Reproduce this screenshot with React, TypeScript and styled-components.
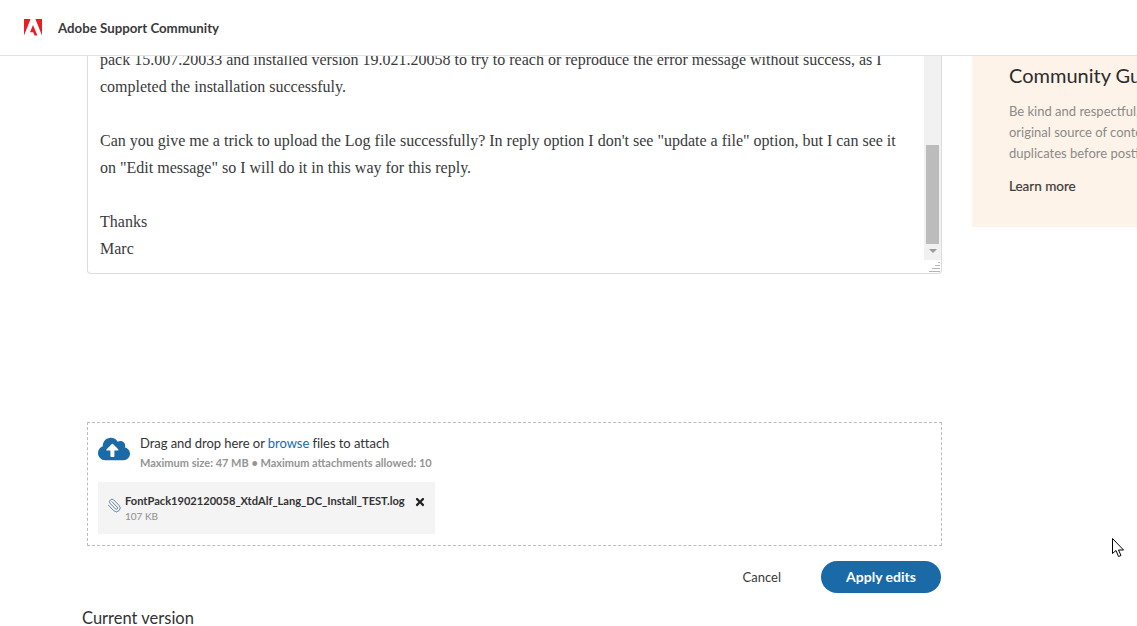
import React from 'react';
import styled, { createGlobalStyle } from 'styled-components';
import { FaCloudUploadAlt, FaTimes } from 'react-icons/fa';
import { Paperclip } from 'lucide-react';

const UI_FONT = `Lato, "Open Sans", sans-serif`;

const GlobalStyle = createGlobalStyle`
  html, body {
    margin: 0;
    padding: 0;
    height: 100%;
    overflow: hidden;
    background: #fff;
  }
  #root {
    height: 100%;
  }
`;

const Page = styled.div`
  position: relative;
  width: 1137px;
  height: 626px;
  overflow: hidden;
  font-family: ${UI_FONT};
  color: #2c2c2c;
`;

const Header = styled.header`
  display: flex;
  align-items: center;
  gap: 16px;
  height: 55px;
  padding-left: 24px;
  border-bottom: 1px solid #e4e4e4;
  box-sizing: content-box;
`;

const BrandName = styled.span`
  font-size: 13.25px;
  font-weight: 700;
  color: #3a3a3a;
`;

const Body = styled.div`
  display: flex;
  align-items: flex-start;
  padding-left: 87px;
  gap: 30px;
`;

const Main = styled.main`
  flex: 0 0 855px;
  width: 855px;
`;

const Editor = styled.div`
  display: flex;
  height: 218px;
  border: 1px solid #dcdcdc;
  border-top: 0;
  border-radius: 0 0 4px 4px;
  box-sizing: border-box;
  overflow: hidden;
`;

const EditorText = styled.div`
  flex: 1;
  padding: 0 12px;
  overflow: hidden;
  font-family: "Liberation Serif", serif;
  font-size: 16px;
  line-height: 27px;
  color: #3a3a3a;
`;

const TextLine = styled.div<{ $lead?: boolean }>`
  white-space: nowrap;
  margin-top: ${(p) => (p.$lead ? '-10px' : '0')};
  min-height: 27px;
`;

const ScrollColumn = styled.div`
  display: flex;
  flex-direction: column;
  width: 17px;
`;

const ScrollTrack = styled.div`
  display: flex;
  flex-direction: column;
  flex: 1;
  background: #f1f1f1;
  padding: 89px 2px 0;
`;

const ScrollThumb = styled.div`
  height: 99px;
  background: #bcbcbc;
`;

const ScrollArrow = styled.div`
  align-self: center;
  width: 0;
  height: 0;
  margin-top: 5px;
  border-left: 4px solid transparent;
  border-right: 4px solid transparent;
  border-top: 4px solid #9a9a9a;
`;

const ResizeCorner = styled.div`
  display: flex;
  justify-content: flex-end;
  height: 13px;
`;

const DropZone = styled.section`
  margin-top: 148px;
  height: 124px;
  box-sizing: border-box;
  border: 1px dashed #bcbcbc;
  padding: 10px 10px;
`;

const DropRow = styled.div`
  display: flex;
  gap: 10px;
`;

const CloudIcon = styled(FaCloudUploadAlt)`
  width: 32px;
  height: 32px;
  color: #1a6aa8;
`;

const DropCopy = styled.div`
  display: flex;
  flex-direction: column;
`;

const DropTitle = styled.div`
  font-size: 13px;
  letter-spacing: -0.05px;
  line-height: 20px;
  color: #333;
`;

const BrowseLink = styled.a`
  color: #1a6aa8;
`;

const DropHint = styled.div`
  margin-top: 1px;
  font-size: 11px;
  font-weight: 700;
  line-height: 18px;
  color: #949494;
`;

const Attachment = styled.div`
  display: flex;
  align-items: flex-start;
  width: 337px;
  height: 52px;
  box-sizing: border-box;
  margin-top: 10px;
  padding: 10px 9px;
  background: #f4f4f4;
`;

const ClipIcon = styled(Paperclip)`
  flex: 0 0 15px;
  width: 15px;
  height: 15px;
  color: #5f7f9f;
  margin: 6px 3px 0 0;
  transform: scaleX(-1);
`;

const FileInfo = styled.div`
  flex: 1;
  display: flex;
  flex-direction: column;
`;

const FileName = styled.div`
  font-size: 11.1px;
  font-weight: 700;
  line-height: 18px;
  color: #333;
  white-space: nowrap;
`;

const FileSize = styled.div`
  font-size: 10px;
  line-height: 13px;
  color: #8e8e8e;
`;

const RemoveIcon = styled(FaTimes)`
  flex: 0 0 12px;
  width: 12px;
  height: 12px;
  color: #222;
  margin-top: 4px;
`;

const Actions = styled.div`
  display: flex;
  justify-content: flex-end;
  align-items: center;
  gap: 40px;
  margin-top: 15px;
  padding-right: 1px;
`;

const CancelButton = styled.button`
  border: 0;
  padding: 0;
  background: none;
  font-family: ${UI_FONT};
  font-size: 13px;
  color: #3a3a3a;
`;

const ApplyButton = styled.button`
  width: 120px;
  height: 32px;
  border: 0;
  border-radius: 16px;
  padding: 0 0 2px;
  background: #1a6aa8;
  color: #fff;
  font-family: ${UI_FONT};
  font-size: 14px;
  font-weight: 700;
`;

const VersionTitle = styled.h3`
  margin: 14px 0 0 -5px;
  font-size: 16.5px;
  font-weight: 400;
  line-height: 22px;
  color: #333;
`;

const Aside = styled.aside`
  flex: 0 0 auto;
  width: 165px;
  height: 171px;
  box-sizing: border-box;
  padding: 6px 0 0 37px;
  background: #fef3e9;
  overflow: hidden;
`;

const AsideTitle = styled.h2`
  margin: 0;
  font-size: 20px;
  font-weight: 400;
  line-height: 26px;
  color: #2c2c2c;
  white-space: nowrap;
`;

const AsideText = styled.p`
  margin: 13px 0 0;
  font-size: 13px;
  line-height: 21px;
  color: #8a8a8a;
  white-space: nowrap;
`;

const LearnMore = styled.a`
  display: block;
  margin-top: 12px;
  font-size: 13.5px;
  font-weight: 400;
  -webkit-text-stroke: 0.2px #3a3a3a;
  line-height: 20px;
  color: #3a3a3a;
`;

const Pointer = styled.svg`
  position: absolute;
  left: 1112px;
  top: 538px;
  width: 13px;
  height: 20px;
`;

const AdobeLogo = () => (
  <svg width="18" height="17" viewBox="0 0 18 17" aria-hidden="true">
    <path fill="#ec1c24" d="M0 0h6.6L0 16.5zM11.4 0H18v16.5zM9 6l4.4 10.5h-2.9l-1.3-3.3H6z" />
  </svg>
);

const Grip = () => (
  <svg width="13" height="13" viewBox="0 0 13 13" aria-hidden="true">
    <path stroke="#b5b5b5" d="M1 11.500h11M4 8.500h8M7 5.500h5M10 2.500h2" />
  </svg>
);

export default function App() {
  return (
    <Page>
      <GlobalStyle />
      <Header>
        <AdobeLogo />
        <BrandName>Adobe Support Community</BrandName>
      </Header>
      <Body>
        <Main>
          <Editor>
            <EditorText>
              <TextLine $lead>pack 15.007.20033 and installed version 19.021.20058 to try to reach or reproduce the error message without success, as I</TextLine>
              <TextLine>completed the installation successfuly.</TextLine>
              <TextLine />
              <TextLine>Can you give me a trick to upload the Log file successfully? In reply option I don't see "update a file" option, but I can see it</TextLine>
              <TextLine>on "Edit message" so I will do it in this way for this reply.</TextLine>
              <TextLine />
              <TextLine>Thanks</TextLine>
              <TextLine>Marc</TextLine>
            </EditorText>
            <ScrollColumn>
              <ScrollTrack>
                <ScrollThumb />
                <ScrollArrow />
              </ScrollTrack>
              <ResizeCorner>
                <Grip />
              </ResizeCorner>
            </ScrollColumn>
          </Editor>
          <DropZone>
            <DropRow>
              <CloudIcon />
              <DropCopy>
                <DropTitle>
                  Drag and drop here or <BrowseLink>browse</BrowseLink> files to attach
                </DropTitle>
                <DropHint>Maximum size: 47 MB • Maximum attachments allowed: 10</DropHint>
              </DropCopy>
            </DropRow>
            <Attachment>
              <ClipIcon strokeWidth={1.5} />
              <FileInfo>
                <FileName>FontPack1902120058_XtdAlf_Lang_DC_Install_TEST.log</FileName>
                <FileSize>107 KB</FileSize>
              </FileInfo>
              <RemoveIcon />
            </Attachment>
          </DropZone>
          <Actions>
            <CancelButton>Cancel</CancelButton>
            <ApplyButton>Apply edits</ApplyButton>
          </Actions>
          <VersionTitle>Current version</VersionTitle>
        </Main>
        <Aside>
          <AsideTitle>Community Guidelines</AsideTitle>
          <AsideText>
            Be kind and respectful, give credit to the
            <br />
            original source of content, and search for
            <br />
            duplicates before posting.
          </AsideText>
          <LearnMore>Learn more</LearnMore>
        </Aside>
      </Body>
      <Pointer viewBox="0 0 13 20" aria-hidden="true">
        <path fill="#fff" stroke="#000" d="M.5.5v15l3.5-3 2.5 6 2.5-1-2.5-5.500h5z" />
      </Pointer>
    </Page>
  );
}
